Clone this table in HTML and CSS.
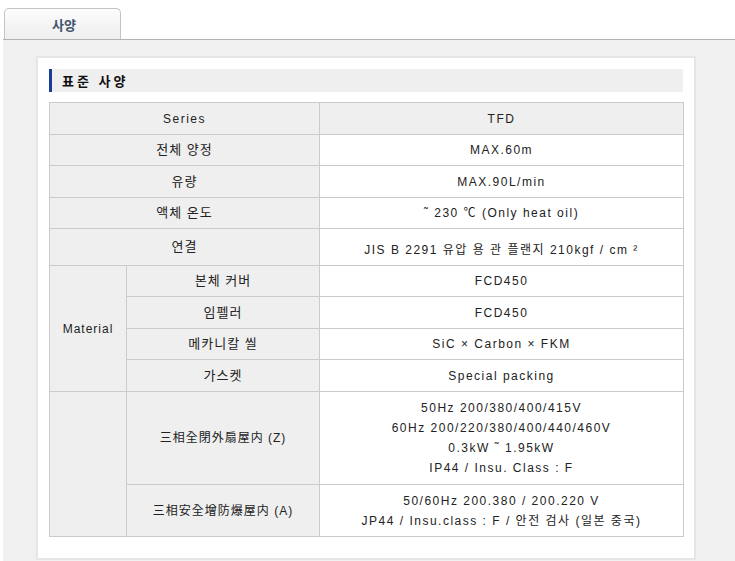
FILE: index.html
```html
<!DOCTYPE html>
<html lang="ko">
<head>
<meta charset="utf-8">
<title>사양</title>
<link rel="stylesheet" href="styles.css">
</head>
<body>
<div class="tabs">
  <div class="tab">사양</div>
</div>
<div class="content">
  <div class="panel">
    <h2 class="heading">표준 사양</h2>
    <table class="spec">
      <colgroup>
        <col class="c1"><col class="c2"><col class="c3">
      </colgroup>
      <tr class="r-head">
        <th colspan="2">Series</th>
        <th class="val-head">TFD</th>
      </tr>
      <tr>
        <th colspan="2">전체 양정</th>
        <td>MAX.60m</td>
      </tr>
      <tr class="h32">
        <th colspan="2">유량</th>
        <td>MAX.90L/min</td>
      </tr>
      <tr>
        <th colspan="2">액체 온도</th>
        <td>˜ 230 ℃ (Only heat oil)</td>
      </tr>
      <tr class="r-tall">
        <th colspan="2">연결</th>
        <td class="low">JIS B 2291 유압 용 관 플랜지 210kgf / cm ²</td>
      </tr>
      <tr>
        <th rowspan="4" class="small">Material</th>
        <th>본체 커버</th>
        <td>FCD450</td>
      </tr>
      <tr class="h32">
        <th>임펠러</th>
        <td>FCD450</td>
      </tr>
      <tr>
        <th>메카니칼 씰</th>
        <td>SiC × Carbon × FKM</td>
      </tr>
      <tr class="h32">
        <th>가스켓</th>
        <td>Special packing</td>
      </tr>
      <tr class="r-multi">
        <th rowspan="2"></th>
        <th class="small">三相全閉外扇屋内 (Z)</th>
        <td>50Hz 200/380/400/415V<br>60Hz 200/220/380/400/440/460V<br>0.3kW ˜ 1.95kW<br>IP44 / Insu. Class : F</td>
      </tr>
      <tr class="r-two">
        <th class="small">三相安全增防爆屋内 (A)</th>
        <td>50/60Hz 200.380 / 200.220 V<br>JP44 / Insu.class : F / 안전 검사 (일본 중국)</td>
      </tr>
    </table>
  </div>
</div>
</body>
</html>
```
FILE: styles.css
```css
html, body {
  margin: 0;
  padding: 0;
  background: #ffffff;
}

body {
  font-family: "Liberation Sans", "Noto Sans CJK KR", sans-serif;
  color: #222222;
  width: 735px;
  height: 561px;
  overflow: hidden;
}

.tabs {
  padding: 8px 0 0 4px;
  height: 31px;
  display: flex;
  align-items: flex-end;
}

.tab {
  width: 115px;
  height: 30px;
  border: 1px solid #c4c4c4;
  border-bottom: none;
  border-radius: 5px 5px 0 0;
  background: linear-gradient(#fcfcfc, #eeeeee);
  color: #44546f;
  font-family: "Noto Sans CJK KR", sans-serif;
  font-weight: bold;
  font-size: 13px;
  line-height: 32px;
  text-align: center;
  text-indent: 3px;
}

.content {
  margin-left: 3px;
  border-top: 1px solid #b3b3b3;
  background: #f0f0f0;
  padding: 16px 39px 0 33px;
  height: 505px;
}

.panel {
  width: 634px;
  background: #ffffff;
  border: 2px solid #e6e6e6;
  padding: 11px 11px 21px 11px;
}

.heading {
  margin: 0 0 10px 0;
  height: 23px;
  line-height: 23px;
  background: #efefef;
  border-left: 3px solid #1a3d9a;
  padding-left: 10px;
  font-family: "Noto Sans CJK KR", sans-serif;
  font-size: 13px;
  font-weight: bold;
  letter-spacing: 3px;
  color: #111111;
}

.spec {
  width: 634px;
  border-collapse: collapse;
  table-layout: fixed;
  font-size: 12px;
  letter-spacing: 1px;
}

.c1 { width: 77px; }
.c2 { width: 193px; }
.c3 { width: 364px; }

.spec th,
.spec td {
  border: 1px solid #cbcbcb;
  padding: 5px 2px;
  line-height: 20px;
  text-align: center;
  vertical-align: middle;
  font-weight: normal;
  color: #222222;
}

.spec th {
  background: #efefef;
  font-size: 13px;
}

.spec th.small {
  font-size: 12px;
}

.spec td {
  background: #ffffff;
  letter-spacing: 1.5px;
}

.spec .val-head {
  background: #efefef;
  font-size: 12px;
  letter-spacing: 1.5px;
}

.r-head th {
  height: 21px;
  font-size: 12px;
  letter-spacing: 1.5px;
}

.h32 th,
.h32 td {
  height: 21px;
}

.r-tall th,
.r-tall td {
  height: 26px;
}

.spec td.low {
  padding-top: 8px;
  padding-bottom: 2px;
}

.r-multi th,
.r-multi td {
  height: 80px;
  padding-top: 6px;
  padding-bottom: 6px;
}

.r-two th,
.r-two td {
  height: 41px;
  padding-top: 5px;
  padding-bottom: 5px;
}
```
